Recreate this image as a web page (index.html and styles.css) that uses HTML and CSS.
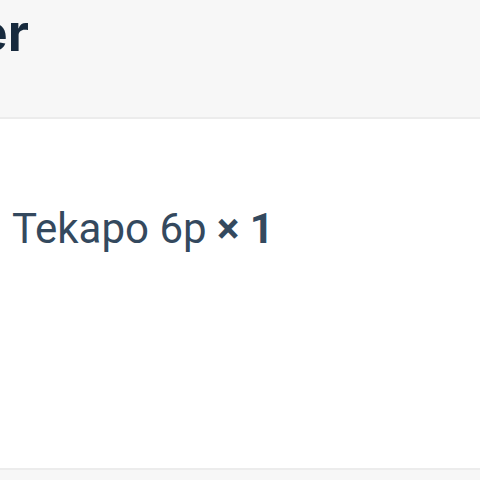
FILE: index.html
```html
<!DOCTYPE html>
<html lang="en">
<head>
  <meta charset="UTF-8">
  <meta name="viewport" content="width=device-width, initial-scale=1.0">
  <title>Order</title>
  <link rel="stylesheet" href="styles.css">
</head>
<body>
  <div class="header">
    <div class="title-clip">
      <h1>Your Order</h1>
    </div>
  </div>

  <div class="order-body">
    <div class="order-item">
      <span class="item-name">Tekapo 6p</span>
      <span class="item-qty">× 1</span>
    </div>
  </div>

  <div class="footer"></div>
</body>
</html>
```

FILE: styles.css
```css
body {
  font-family: Roboto, "Liberation Sans", sans-serif;
  background-color: #fff;
  margin: 0;
  padding: 0;
  width: 480px;
  height: 480px;
  overflow: hidden;
}
.header {
  background-color: #f7f7f7;
  height: 117px;
  border-bottom: 2px solid #ececec;
}
.title-clip {
  width: 29px;
  overflow: hidden;
  display: flex;
  justify-content: flex-end;
}
h1 {
  margin: 7px 0 0 0;
  font-family: Inter, Roboto, sans-serif;
  font-size: 52px;
  line-height: 52px;
  font-weight: 700;
  color: #172a3d;
  white-space: nowrap;
}
.order-body {
  height: 349px;
  padding: 89px 0 0 12px;
  box-sizing: border-box;
}
.order-item {
  font-size: 42px;
  line-height: 42px;
  color: #34495e;
}
.item-qty {
  font-weight: 700;
}
.footer {
  border-top: 2px solid #ececec;
  background-color: #f7f7f7;
  height: 20px;
}
```
